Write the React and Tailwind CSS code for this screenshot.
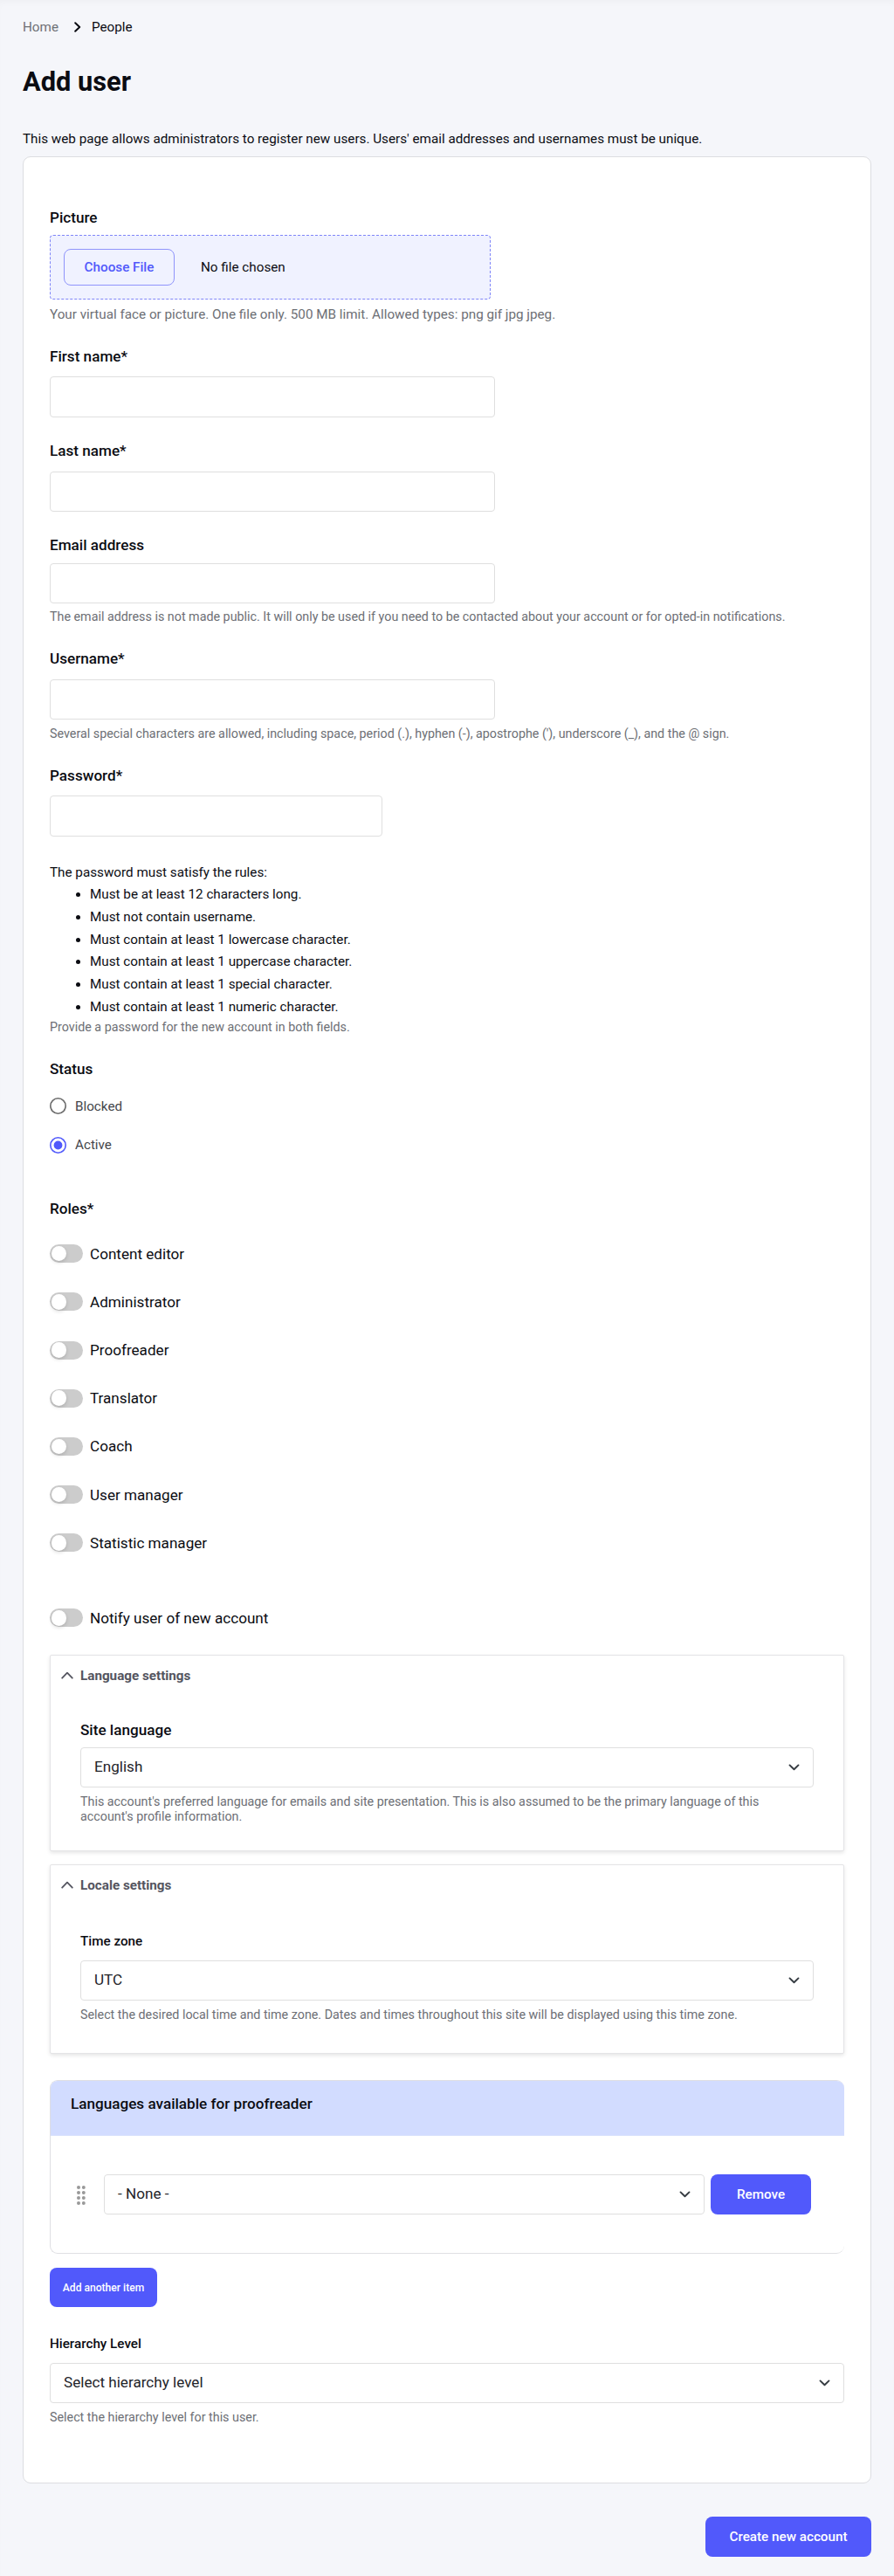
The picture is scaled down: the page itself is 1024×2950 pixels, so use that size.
const label = "h-5 text-[17.14px] leading-5 font-medium text-[#0b0c12]";
const help = "h-5 whitespace-nowrap text-[14.3px] leading-5 text-[#6d6f75]";
const field = "block rounded-[4px] border border-[#dfdfdf] bg-white";
const button = "flex items-center justify-center rounded-[8px] bg-[#5159fb] font-medium text-white";

const roles = [
  "Content editor",
  "Administrator",
  "Proofreader",
  "Translator",
  "Coach",
  "User manager",
  "Statistic manager",
];

const rules = [
  "Must be at least 12 characters long.",
  "Must not contain username.",
  "Must contain at least 1 lowercase character.",
  "Must contain at least 1 uppercase character.",
  "Must contain at least 1 special character.",
  "Must contain at least 1 numeric character.",
];

function Select({ value, className = "" }) {
  return (
    <div
      className={`flex h-[46px] items-center justify-between rounded-[4px] border border-[#dfdfdf] bg-white pr-[15px] pl-[15px] ${className}`}
    >
      <span className="pb-[2px] text-[17.12px] leading-5 text-[#232429]">{value}</span>
      <svg className="h-2 w-[13px]" viewBox="0 0 13 8" fill="none">
        <path d="M1.5 1.4 6.5 6.3l5-4.9" stroke="#343a40" strokeWidth="1.9" strokeLinecap="round" strokeLinejoin="round" />
      </svg>
    </div>
  );
}

function Toggle({ text }) {
  return (
    <label className="flex items-center gap-[8px] text-[17.12px] leading-5 text-[#0b0c12]">
      <span className="flex h-[21px] w-[38px] items-center rounded-full bg-[#ccc] pl-[1.8px]">
        <span className="size-[17.5px] rounded-full bg-white shadow-[0_2px_4px_rgba(0,0,0,0.14)]" />
      </span>
      {text}
    </label>
  );
}

function Radio({ text, checked }) {
  return (
    <label className="flex h-5 items-center gap-[10px] text-[15.22px] leading-5 text-[#44464b]">
      <svg className="size-[19px]" viewBox="0 0 19 19" fill="none">
        <circle cx="9.5" cy="9.5" r="8.7" stroke={checked ? "#5159fb" : "#6b6b6b"} strokeWidth="1.6" />
        {checked && <circle cx="9.5" cy="9.5" r="4.9" fill="#5159fb" />}
      </svg>
      {text}
    </label>
  );
}

function Panel({ title, className, children }) {
  return (
    <section
      className={`rounded-[2px] border border-[#e4e4e6] bg-white px-[34px] pt-[12.4px] shadow-[0_2px_4px_rgba(0,0,0,0.1)] ${className}`}
    >
      <h2 className="-ml-[22px] flex h-5 items-center gap-[8px] text-[15.22px] leading-5 font-bold text-[#545560]">
        <svg className="h-[9px] w-[14px]" viewBox="0 0 14 9" fill="none">
          <path d="M1.2 7.7 7 1.7l5.8 6" stroke="#545560" strokeWidth="1.8" strokeLinecap="round" strokeLinejoin="round" />
        </svg>
        {title}
      </h2>
      {children}
    </section>
  );
}

export default function App() {
  return (
    <main className="h-[2950px] w-full bg-[#f5f6fa] px-[26px] pt-[21px] font-['Roboto',sans-serif] text-[15.24px] text-[#0b0c12] shadow-[inset_0_6px_8px_-4px_rgba(0,0,0,0.03)]">
      <nav className="flex h-5 items-center leading-5">
        <span className="text-[#6f7176]">Home</span>
        <svg className="ml-[17.5px] h-3 w-2" viewBox="0 0 8 12" fill="none">
          <path d="M1.2 1.3 6.2 6l-5 4.7" stroke="#0b0c12" strokeWidth="2" strokeLinecap="round" strokeLinejoin="round" />
        </svg>
        <span className="ml-[12.5px]">People</span>
      </nav>
      <h1 className="mt-[32.5px] h-10 text-[30.8px] leading-10 font-bold">Add user</h1>
      <p className="mt-[35px] h-5 leading-5 whitespace-nowrap">
        This web page allows administrators to register new users. Users' email addresses and usernames must be unique.
      </p>

      <form className="mt-[10.5px] h-[2665px] rounded-[9px] border border-[#dcdde1] bg-white px-[30px] pt-[59px]">
        <div className={label}>Picture</div>
        <div className="mt-[10px] flex h-[74px] w-[505px] items-center rounded-[4px] border border-dashed border-[#7f85f8] bg-[#f0f2ff] pl-[15px]">
          <span className="flex h-[42px] w-[127px] items-center justify-center rounded-[8px] border border-[#8f94fb] font-medium text-[#5159fb]">
            Choose File
          </span>
          <span className="ml-[30px]">No file chosen</span>
        </div>
        <p className="mt-[7px] h-5 leading-5 text-[#6d6f75]">
          Your virtual face or picture. One file only. 500 MB limit. Allowed types: png gif jpg jpeg.
        </p>

        <div className={`mt-[27.6px] ${label}`}>First name*</div>
        <input className={`mt-[13.4px] h-[47px] w-[510px] ${field}`} />
        <div className={`mt-[28px] ${label}`}>Last name*</div>
        <input className={`mt-[14px] h-[46px] w-[510px] ${field}`} />
        <div className={`mt-[28.3px] ${label}`}>Email address</div>
        <input className={`mt-[10.7px] h-[46px] w-[510px] ${field}`} />
        <p className={`mt-[5.4px] ${help}`}>
          The email address is not made public. It will only be used if you need to be contacted about your account or for opted-in notifications.
        </p>
        <div className={`mt-[28px] ${label}`}>Username*</div>
        <input className={`mt-[13.6px] h-[46px] w-[510px] ${field}`} />
        <p className={`mt-[6px] ${help}`}>
          Several special characters are allowed, including space, period (.), hyphen (-), apostrophe ('), underscore (_), and the @ sign.
        </p>
        <div className={`mt-[27.6px] ${label}`}>Password*</div>
        <input className={`mt-[13.4px] h-[47px] w-[381px] ${field}`} />
        <p className="mt-[31px] h-5 leading-5">The password must satisfy the rules:</p>
        <ul className="mt-[3.5px] list-disc pl-[46px]">
          {rules.map((rule) => (
            <li key={rule} className="h-[25.67px] leading-[25.67px]">
              {rule}
            </li>
          ))}
        </ul>
        <p className={help}>Provide a password for the new account in both fields.</p>

        <div className={`mt-[27.7px] ${label}`}>Status</div>
        <div className="mt-[22.6px] flex flex-col gap-[24.6px]">
          <Radio text="Blocked" />
          <Radio text="Active" checked />
        </div>

        <div className={`mt-[52.8px] ${label}`}>Roles*</div>
        <div className="mt-[14px]">
          {roles.map((role) => (
            <div key={role} className="flex h-[55.2px] items-center">
              <Toggle text={role} />
            </div>
          ))}
        </div>
        <div className="mt-[48px] h-[21px]">
          <Toggle text="Notify user of new account" />
        </div>

        <Panel title="Language settings" className="mt-[32px] h-[225px]">
          <div className={`mt-[42.2px] ${label}`}>Site language</div>
          <Select value="English" className="mt-[10.4px]" />
          <p className="mt-[7.4px] pr-[40px] text-[14.3px] leading-[17.3px] text-[#6d6f75]">
            This account's preferred language for emails and site presentation. This is also assumed to be the primary language of this account's profile information.
          </p>
        </Panel>

        <Panel title="Locale settings" className="mt-[15px] h-[217px]">
          <div className="mt-[44.6px] h-5 leading-5 font-medium">Time zone</div>
          <Select value="UTC" className="mt-[12px]" />
          <p className={`mt-[6px] ${help}`}>
            Select the desired local time and time zone. Dates and times throughout this site will be displayed using this time zone.
          </p>
        </Panel>

        <section className="mt-[30px] h-[199px] overflow-hidden rounded-[9px] border border-r-0 border-[#dfdfe3]">
          <div className="h-[63px] border-b border-[#d8e0fb] bg-[#d2dcff] pt-[15.5px] pl-[23px] text-[17.14px] leading-5 font-medium">
            Languages available for proofreader
          </div>
          <div className="mt-[44px] flex h-[46px] items-stretch pr-[38px] pl-[28.5px]">
            <svg className="mt-[12px] h-6 w-3" viewBox="0 0 12 24" fill="#999">
              {[3, 9, 15, 21].map((y) => (
                <g key={y}>
                  <circle cx="3" cy={y} r="2" />
                  <circle cx="8.8" cy={y} r="2" />
                </g>
              ))}
            </svg>
            <Select value="- None -" className="ml-[20.5px] flex-1" />
            <button type="button" className={`ml-[7px] w-[115px] ${button}`}>
              Remove
            </button>
          </div>
        </section>

        <button type="button" className={`mt-[16px] h-[45px] w-[123px] text-[12.1px] ${button}`}>
          Add another item
        </button>

        <div className="mt-[32px] h-5 leading-5 font-medium">Hierarchy Level</div>
        <Select value="Select hierarchy level" className="mt-[12px]" />
        <p className={`mt-[6px] ${help}`}>Select the hierarchy level for this user.</p>
      </form>

      <button type="button" className={`mt-[38px] ml-auto h-[46px] w-[190px] ${button}`}>
        Create new account
      </button>
    </main>
  );
}
